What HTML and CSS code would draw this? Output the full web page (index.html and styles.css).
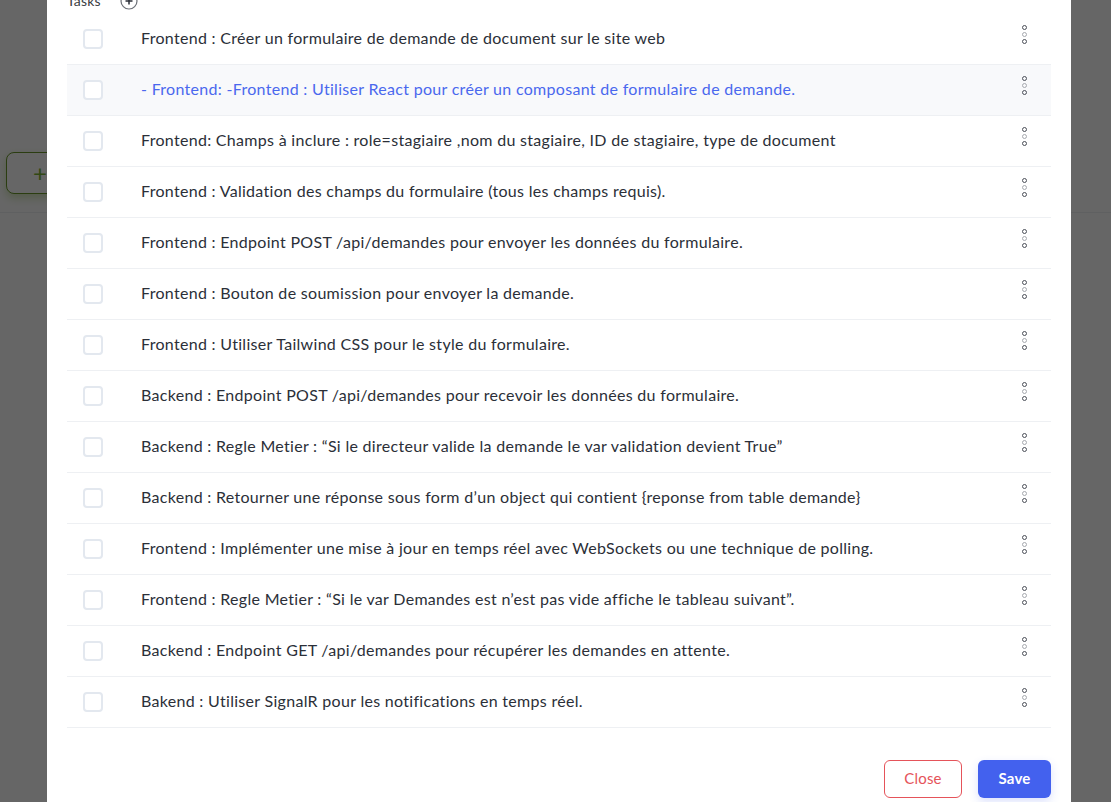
FILE: index.html
```html
<!DOCTYPE html>
<html lang="fr">
<head>
<meta charset="utf-8">
<title>Tasks</title>
<link rel="stylesheet" href="styles.css">
</head>
<body>
<div class="page">
  <div class="toolbar">
    <button class="add-btn">+</button>
  </div>
</div>
<div class="overlay">
  <div class="modal">
    <div class="modal-head">
      <span class="head-label">Tasks</span>
      <svg class="plus-icon" width="18" height="18" viewBox="0 0 18 18"><circle cx="9" cy="9" r="8" fill="none" stroke="#6b6f76" stroke-width="1.2"/><path d="M9 5.5v7M5.5 9h7" stroke="#2b2f38" stroke-width="1.5"/></svg>
    </div>
    <ul class="task-list">
      <li class="task"><span class="check"></span><span class="task-text">Frontend : Créer un formulaire de demande de document sur le site web</span><span class="kebab"><i></i><i class="mid"></i><i></i></span></li>
      <li class="task active"><span class="check"></span><span class="task-text">- Frontend: -Frontend : Utiliser React pour créer un composant de formulaire de demande.</span><span class="kebab"><i></i><i class="mid"></i><i></i></span></li>
      <li class="task"><span class="check"></span><span class="task-text">Frontend: Champs à inclure : role=stagiaire ,nom du stagiaire, ID de stagiaire, type de document</span><span class="kebab"><i></i><i class="mid"></i><i></i></span></li>
      <li class="task"><span class="check"></span><span class="task-text">Frontend : Validation des champs du formulaire (tous les champs requis).</span><span class="kebab"><i></i><i class="mid"></i><i></i></span></li>
      <li class="task"><span class="check"></span><span class="task-text">Frontend : Endpoint POST /api/demandes pour envoyer les données du formulaire.</span><span class="kebab"><i></i><i class="mid"></i><i></i></span></li>
      <li class="task"><span class="check"></span><span class="task-text">Frontend : Bouton de soumission pour envoyer la demande.</span><span class="kebab"><i></i><i class="mid"></i><i></i></span></li>
      <li class="task"><span class="check"></span><span class="task-text">Frontend : Utiliser Tailwind CSS pour le style du formulaire.</span><span class="kebab"><i></i><i class="mid"></i><i></i></span></li>
      <li class="task"><span class="check"></span><span class="task-text">Backend : Endpoint POST /api/demandes pour recevoir les données du formulaire.</span><span class="kebab"><i></i><i class="mid"></i><i></i></span></li>
      <li class="task"><span class="check"></span><span class="task-text">Backend : Regle Metier : “Si le directeur valide la demande le var validation devient True”</span><span class="kebab"><i></i><i class="mid"></i><i></i></span></li>
      <li class="task"><span class="check"></span><span class="task-text">Backend : Retourner une réponse sous form d’un object qui contient {reponse from table demande}</span><span class="kebab"><i></i><i class="mid"></i><i></i></span></li>
      <li class="task"><span class="check"></span><span class="task-text">Frontend : Implémenter une mise à jour en temps réel avec WebSockets ou une technique de polling.</span><span class="kebab"><i></i><i class="mid"></i><i></i></span></li>
      <li class="task"><span class="check"></span><span class="task-text">Frontend : Regle Metier : “Si le var Demandes est n’est pas vide affiche le tableau suivant”.</span><span class="kebab"><i></i><i class="mid"></i><i></i></span></li>
      <li class="task"><span class="check"></span><span class="task-text">Backend : Endpoint GET /api/demandes pour récupérer les demandes en attente.</span><span class="kebab"><i></i><i class="mid"></i><i></i></span></li>
      <li class="task"><span class="check"></span><span class="task-text">Bakend : Utiliser SignalR pour les notifications en temps réel.</span><span class="kebab"><i></i><i class="mid"></i><i></i></span></li>
    </ul>
    <div class="modal-foot">
      <button class="btn btn-close">Close</button>
      <button class="btn btn-save">Save</button>
    </div>
  </div>
</div>
</body>
</html>
```

FILE: styles.css
```css
* { box-sizing: border-box; }
html, body { margin: 0; padding: 0; }
body {
  font-family: "Lato", "Noto Sans", sans-serif;
  background: #ffffff;
  width: 1111px;
  height: 802px;
  overflow: hidden;
}
.page {
  height: 802px;
}
.toolbar {
  height: 213px;
  border-bottom: 1px solid #eef0f2;
  padding: 152px 0 0 6px;
}
.add-btn {
  width: 120px;
  height: 42px;
  border: 1.5px solid #6b9a2c;
  border-radius: 8px;
  background: #ffffff;
  color: #7cb332;
  font-size: 24px;
  font-family: "Lato", sans-serif;
  text-align: left;
  padding: 0 0 2px 26px;
  box-shadow: 0 4px 8px rgba(124, 179, 50, 0.35);
}
.overlay {
  position: fixed;
  inset: 0;
  background: rgba(0, 0, 0, 0.6);
}
.modal {
  width: 1024px;
  margin: -32px 0 0 47px;
  background: #ffffff;
  padding: 20px 20px 20px;
}
.modal-head {
  display: flex;
  align-items: center;
  gap: 19px;
  height: 24px;
  margin-bottom: 2px;
}
.head-label {
  font-size: 14px;
  color: #3a3d44;
  letter-spacing: 0.2px;
}
.plus-icon {
  margin-top: 2px;
}
.task-list {
  list-style: none;
  margin: 0;
  padding: 0;
}
.task {
  display: flex;
  align-items: center;
  height: 51px;
  border-bottom: 1px solid #eef0f3;
  padding: 0 0 0 16px;
  color: #2b2f38;
  font-size: 16px;
}
.task.active {
  background: #f8f9fb;
}
.task.active .task-text {
  color: #4a68ee;
}
.check {
  width: 20px;
  height: 20px;
  border: 2px solid #e3e8ef;
  border-radius: 4px;
  background: #ffffff;
  flex: none;
  margin-right: 38px;
}
.task-text {
  flex: 1;
  white-space: nowrap;
  letter-spacing: 0.3px;
  padding-bottom: 4px;
}
.kebab {
  width: 54px;
  display: flex;
  flex-direction: column;
  align-items: center;
  gap: 2px;
  margin-top: -10px;
}
.kebab i {
  display: block;
  width: 5px;
  height: 5px;
  border: 1.5px solid #4b4f58;
  border-radius: 50%;
}
.kebab i.mid {
  border-color: #a7aab0;
}
.modal-foot {
  display: flex;
  justify-content: flex-end;
  gap: 16px;
  margin-top: 32px;
}
.btn {
  height: 38px;
  border-radius: 6px;
  font-family: "Lato", sans-serif;
  font-size: 15px;
  letter-spacing: 0.2px;
  cursor: pointer;
  padding: 0 0 2px;
}
.btn-close {
  width: 78px;
  border: 1px solid #e5535a;
  background: #ffffff;
  color: #e5535a;
}
.btn-save {
  width: 73px;
  border: none;
  background: #4361ee;
  color: #ffffff;
  font-weight: 700;
  box-shadow: 0 4px 10px rgba(67, 97, 238, 0.18);
}
```
